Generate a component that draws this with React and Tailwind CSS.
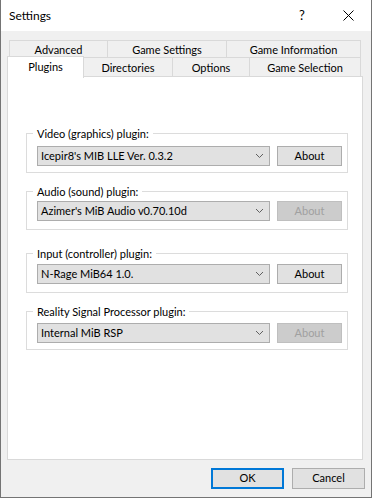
import React from 'react';

// per-group spacing read off the reference (dialog units round unevenly)
const plugins = [
    { label: 'Video (graphics) plugin:', value: "Icepir8's MIB LLE Ver. 0.3.2", about: true, box: 'mt-[49px] pt-[5px] pb-[6px]' },
    { label: 'Audio (sound) plugin:', value: "Azimer's MiB Audio v0.70.10d", about: false, box: 'mt-[11px] pt-[2px] pb-[8px]' },
    { label: 'Input (controller) plugin:', value: 'N-Rage MiB64 1.0.', about: true, box: 'mt-[16px] pt-[3px] pb-[8px]' },
    { label: 'Reality Signal Processor plugin:', value: 'Internal MiB RSP', about: false, box: 'mt-[11px] pt-[4px] pb-[6px]' },
];

function Chevron() {
    return (
        <svg width="9" height="6" viewBox="0 0 9 6" className="shrink-0">
            <polyline points="1,1 4.5,4.5 8,1" fill="none" stroke="#606060" strokeWidth="1" />
        </svg>
    );
}

function PluginGroup({ label, value, about, box }) {
    return (
        <fieldset className={`${box} ml-[18px] w-[321px] border border-[#dcdcdc] pl-[10px] pr-[5px]`}>
            <legend className="-ml-[4px] px-[4px] leading-[15px]">{label}</legend>
            <div className="flex items-center gap-[7px]">
                <div className="flex h-[20px] w-[233px] items-center justify-between border border-[#adadad] bg-[#e1e1e1] pl-[3px] pr-[5px]">
                    <span>{value}</span>
                    <Chevron />
                </div>
                <button
                    className={`h-[20px] w-[65px] border ${about
                        ? 'border-[#adadad] bg-[#e1e1e1] text-black'
                        : 'border-[#bfbfbf] bg-[#cccccc] text-[#a0a0a0]'
                        }`}
                >
                    About
                </button>
            </div>
        </fieldset>
    );
}

export default function App() {
    const row1 = [
        { label: 'Advanced', w: 'w-[99px] border-l' },
        { label: 'Game Settings', w: 'w-[119px]' },
        { label: 'Game Information', w: 'w-[134px]' },
    ];
    const row2 = [
        { label: 'Directories', w: 'w-[89px]' },
        { label: 'Options', w: 'w-[77px]' },
        { label: 'Game Selection', w: 'w-[111px]' },
    ];

    return (
        <div className="flex h-[498px] w-[372px] flex-col border-x border-b border-[#747474] bg-[#f0f0f0] font-['Lato',sans-serif] text-[11px] text-black">
            {/* Title bar */}
            <div className="flex h-[31px] shrink-0 items-center bg-white">
                <span className="flex-1 pl-[8px] text-[12px]">Settings</span>
                <div className="flex h-full w-[46px] items-center justify-center text-[13px]">?</div>
                <div className="flex h-full w-[46px] items-center justify-center">
                    <svg width="11" height="11" viewBox="0 0 11 11">
                        <path d="M0.5 0.5 L10.5 10.5 M10.5 0.5 L0.5 10.5" stroke="#000" strokeWidth="1" />
                    </svg>
                </div>
            </div>

            {/* Tabs */}
            <div className="mt-[9px] ml-[8px] flex h-[17px]">
                {row1.map((t) => (
                    <div key={t.label} className={`${t.w} flex items-center justify-center border-t border-r border-[#d9d9d9] pt-[2px]`}>
                        {t.label}
                    </div>
                ))}
            </div>
            <div className="ml-[6px] flex h-[19px] items-start">
                <div className="relative z-10 -mt-px flex h-[22px] w-[77px] justify-center border-x border-t border-[#d9d9d9] bg-white pt-[2px]">
                    Plugins
                </div>
                {row2.map((t) => (
                    <div key={t.label} className={`${t.w} flex h-[19px] items-center justify-center border-t border-r border-[#d9d9d9] pt-[2px]`}>
                        {t.label}
                    </div>
                ))}
            </div>

            {/* Panel */}
            <div className="ml-[6px] flex h-[384px] w-[356px] flex-col border border-[#d9d9d9] bg-white">
                {plugins.map((p) => (
                    <PluginGroup key={p.label} {...p} />
                ))}
            </div>

            {/* Buttons */}
            <div className="mt-[8px] flex justify-end gap-[8px] pr-[6px]">
                <button className="h-[21px] w-[73px] border-2 border-[#0078d7] bg-[#e1e1e1]">OK</button>
                <button className="h-[21px] w-[73px] border border-[#adadad] bg-[#e1e1e1]">Cancel</button>
            </div>
        </div>
    );
}
